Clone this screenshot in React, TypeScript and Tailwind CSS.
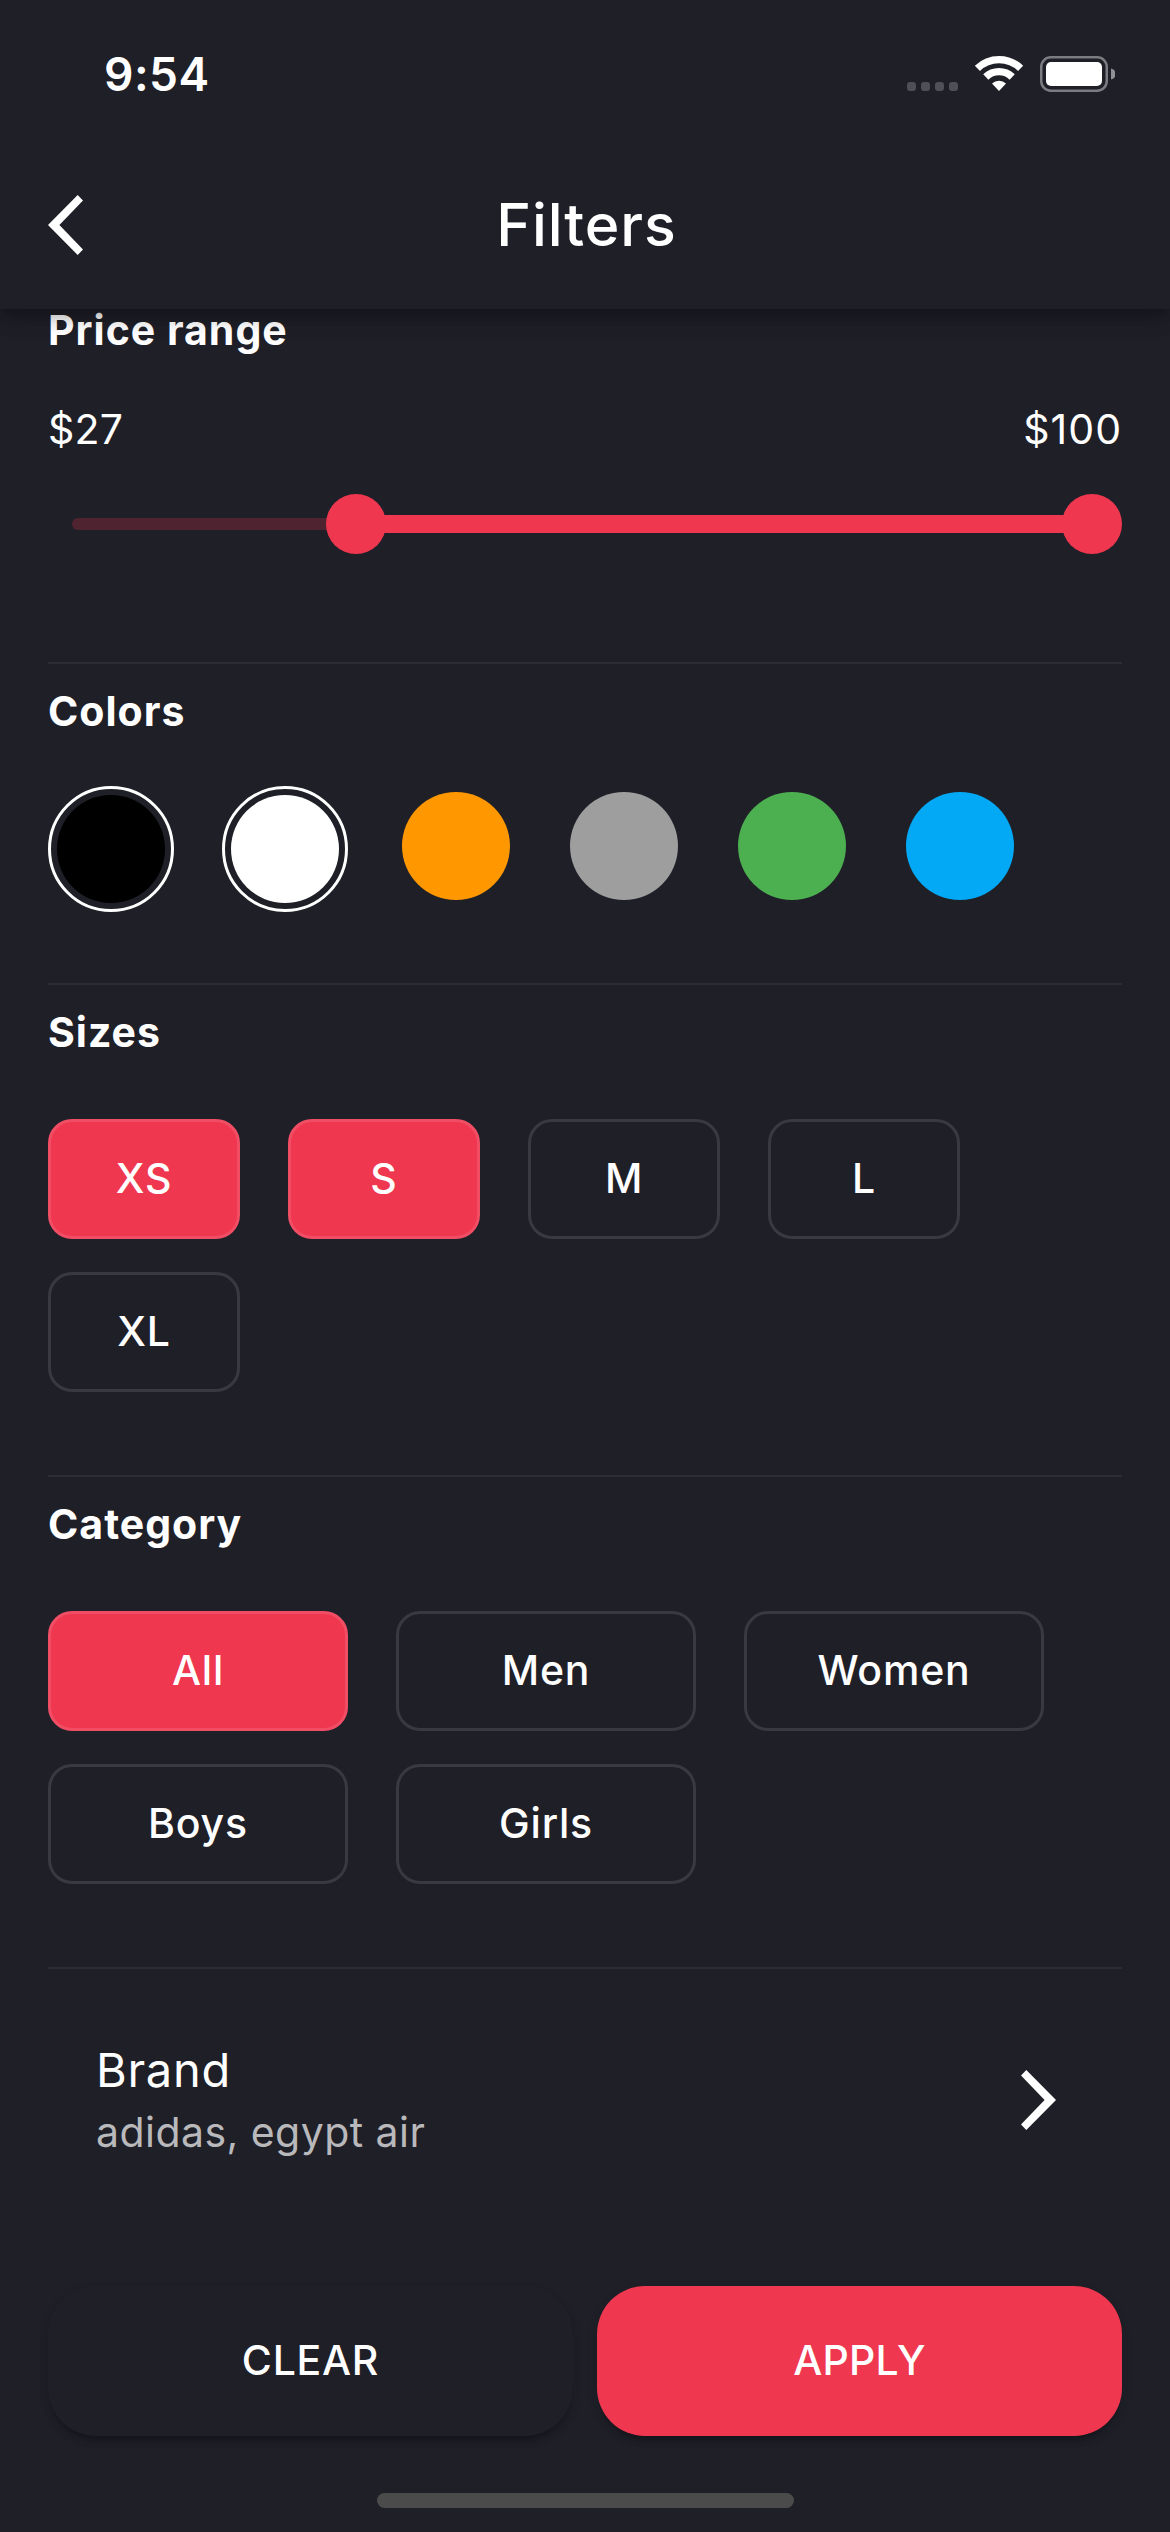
import type { ReactNode } from "react";

function StatusBar() {
  return (
    <div className="flex h-[141px] items-start justify-between pr-[55px] pl-[104px]">
      <div className="mt-[46px] text-[46px] leading-[56px] font-semibold tracking-[0.5px]">9:54</div>
      <svg className="mt-[50px] block" width="208" height="46" viewBox="907 50 208 46">
        <g fill="#4f4f58">
          <rect x="907" y="82" width="9" height="9" rx="3" />
          <rect x="921" y="82" width="9" height="9" rx="3" />
          <rect x="935" y="82" width="9" height="9" rx="3" />
          <rect x="949" y="82" width="9" height="9" rx="3" />
        </g>
        <g fill="none" stroke="#fff" strokeWidth="7.4">
          <path d="M977.4 68.3 A31.2 31.2 0 0 1 1020.6 68.3" />
          <path d="M985.8 77 A19 19 0 0 1 1012.2 77" />
        </g>
        <path d="M999 91 L992 83.6 A10 10 0 0 1 1006 83.6 Z" fill="#fff" />
        <rect x="1041.25" y="57.25" width="65.5" height="33.5" rx="9.5" fill="none" stroke="#7b7b81" strokeWidth="2.5" />
        <rect x="1046" y="62" width="56" height="24" rx="5" fill="#fff" />
        <path d="M1111 68.5 A5.6 5.6 0 0 1 1111 79.5 Z" fill="#8f8f94" />
      </svg>
    </div>
  );
}

function Chevron({ flip = false }: { flip?: boolean }) {
  return (
    <svg
      className={flip ? "block rotate-180" : "block"}
      width="35"
      height="60"
      viewBox="0 0 35 60"
      fill="#fff"
    >
      <path d="M0 30 L29.7 0 L35 5.4 L11.4 30 L35 54.6 L29.7 60 Z" />
    </svg>
  );
}

function Header() {
  return (
    <header className="relative z-10 h-[309px] bg-[#1f1f28] shadow-[0_6px_12px_-3px_rgba(0,0,0,0.2),0_12px_15px_0_rgba(0,0,0,0.14),0_3px_30px_0_rgba(0,0,0,0.12)]">
      <StatusBar />
      <div className="grid h-[168px] grid-cols-[120px_1fr_120px] items-center">
        <button className="pl-12">
          <Chevron />
        </button>
        <h1 className="pl-[3px] text-center text-[59px] leading-[72px] font-medium tracking-[0.9px]">Filters</h1>
      </div>
    </header>
  );
}

function Section({ title, children }: { title: string; children: ReactNode }) {
  return (
    <section className="border-t-2 border-[#2c2c35] pt-[23px]">
      <Heading>{title}</Heading>
      {children}
    </section>
  );
}

function Heading({ children }: { children: ReactNode }) {
  return <h2 className="text-[41px] leading-[48px] font-bold tracking-[1px]">{children}</h2>;
}

function Slider() {
  return (
    <div className="mt-10 flex h-[61px] items-center pl-6">
      <div className="h-3 w-[260px] rounded-l-full bg-[#4f2430]" />
      <div className="z-[1] -ml-[6px] size-[60px] shrink-0 rounded-full bg-[#ef3750]" />
      <div className="-mx-[3px] h-[18px] flex-1 bg-[#ef3750]" />
      <div className="size-[60px] shrink-0 rounded-full bg-[#ef3750]" />
    </div>
  );
}

function Swatch({ color, selected }: { color: string; selected: boolean }) {
  return selected ? (
    <div className="size-[126px] rounded-full border-[3px] border-white p-[6px]">
      <div className={`size-full rounded-full ${color}`} />
    </div>
  ) : (
    <div className="size-[120px] p-[6px]">
      <div className={`size-full rounded-full ${color}`} />
    </div>
  );
}

function Chip({ label, selected, wide }: { label: string; selected: boolean; wide?: boolean }) {
  return (
    <button
      className={`flex h-[120px] items-center justify-center rounded-3xl border-[3px] pb-[2px] text-[41px] leading-[48px] font-medium tracking-[0.8px] ${
        wide ? "w-[300px]" : "w-[192px]"
      } ${selected ? "border-[#f14e65] bg-[#ef3750]" : "border-[#393942]"}`}
    >
      {label}
    </button>
  );
}

const swatches = [
  { color: "bg-black", selected: true },
  { color: "bg-white", selected: true },
  { color: "bg-[#ff9800]", selected: false },
  { color: "bg-[#9e9e9e]", selected: false },
  { color: "bg-[#4caf50]", selected: false },
  { color: "bg-[#03a9f4]", selected: false },
];

const sizes = ["XS", "S", "M", "L", "XL"];
const categories = ["All", "Men", "Women", "Boys", "Girls"];

export default function App() {
  return (
    <div className="flex h-[2532px] w-[1170px] flex-col overflow-hidden bg-[#1f1f28] font-[Inter,sans-serif] text-white">
      <Header />
      <main className="-mt-[3px] px-12">
        <section className="h-[356px]">
          <Heading>Price range</Heading>
          <div className="mt-[51px] flex justify-between text-[41px] leading-[48px]">
            <span className="tracking-[0.2px]">$27</span>
            <span className="tracking-[1px]">$100</span>
          </div>
          <Slider />
        </section>

        <Section title="Colors">
          <div className="mt-[51px] flex items-start gap-12 pb-[71px]">
            {swatches.map((s) => (
              <Swatch key={s.color} color={s.color} selected={s.selected} />
            ))}
          </div>
        </Section>

        <Section title="Sizes">
          <div className="mt-[63px] flex flex-wrap gap-x-12 gap-y-[33px] pb-[83px]">
            {sizes.map((s) => (
              <Chip key={s} label={s} selected={s === "XS" || s === "S"} />
            ))}
          </div>
        </Section>

        <Section title="Category">
          <div className="mt-[63px] flex flex-wrap gap-x-12 gap-y-[33px] pb-[83px]">
            {categories.map((c) => (
              <Chip key={c} label={c} selected={c === "All"} wide />
            ))}
          </div>
        </Section>

        <section className="flex items-center justify-between border-t-2 border-[#2c2c35] pt-[73px] pr-[66px] pl-12">
          <div>
            <div className="text-[47px] leading-[56px] tracking-[0.7px]">Brand</div>
            <div className="mt-[10px] text-[41px] leading-[48px] tracking-[0.45px] text-[#b9b9bc]">
              adidas, egypt air
            </div>
          </div>
          <div className="mt-[2px]">
            <Chevron flip />
          </div>
        </section>

        <div className="mt-[130px] grid grid-cols-2 gap-6 text-[41px] leading-[48px] font-medium">
          <button className="h-[150px] rounded-[48px] bg-[#1f1f28] pb-[2px] tracking-[0.75px] shadow-[0_9px_4px_-6px_rgba(0,0,0,0.14),0_6px_6px_0_rgba(0,0,0,0.12),0_4px_12px_0_rgba(0,0,0,0.07)]">
            CLEAR
          </button>
          <button className="h-[150px] rounded-[48px] bg-[#ef3750] pb-[2px] tracking-[0.2px] shadow-[0_9px_4px_-6px_rgba(0,0,0,0.14),0_6px_6px_0_rgba(0,0,0,0.12),0_4px_12px_0_rgba(0,0,0,0.07)]">
            APPLY
          </button>
        </div>
      </main>
      <div className="mt-[57px] h-[15px] w-[417px] self-center rounded-full bg-[#4b4b4b]" />
    </div>
  );
}
